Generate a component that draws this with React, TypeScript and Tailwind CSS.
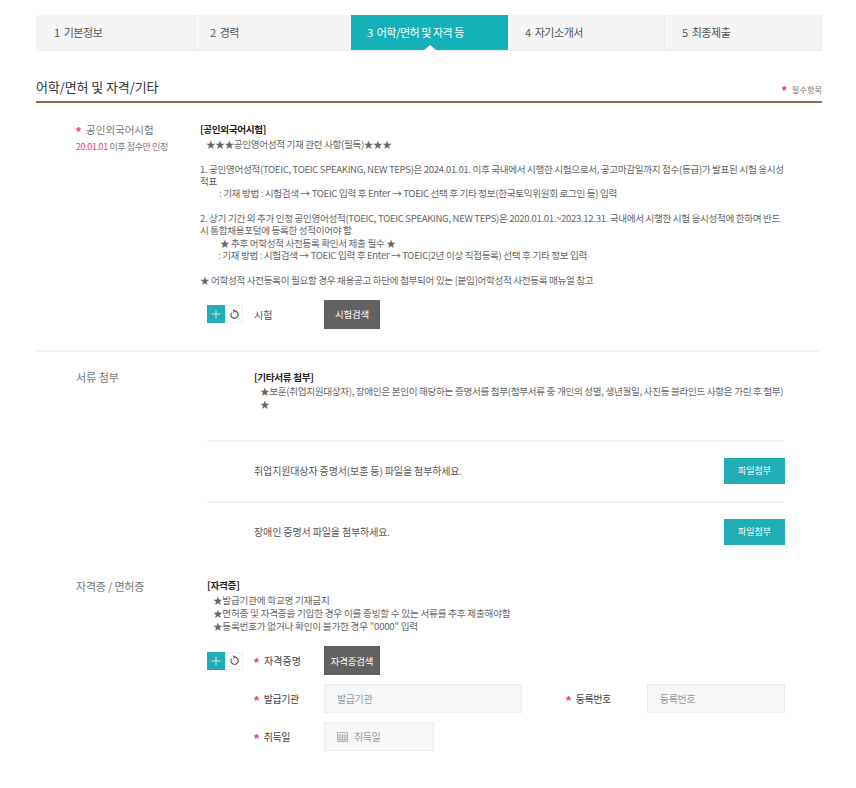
import { Plus } from "lucide-react";

const FONT = "[font-family:'Noto_Sans_CJK_KR','Noto_Sans',sans-serif]";

const steps = ["1  기본정보", "2  경력", "3  어학/면허 및 자격 등", "4  자기소개서", "5  최종제출"];

function Req() {
  return (
    <span className="relative top-[2px] mr-[5px] font-['Liberation_Sans'] text-[13px] font-bold leading-[0] text-[#e8466a]">
      *
    </span>
  );
}

function AddReset() {
  return (
    <div className="flex h-[18px] w-[36px] shrink-0">
      <button className="flex h-[18px] w-[18px] items-center justify-center bg-[#20adb5]">
        <Plus className="h-[14px] w-[14px] text-white" strokeWidth={1.2} />
      </button>
      <button className="flex h-[18px] w-[18px] items-center justify-center border border-[#eeeeee] bg-white">
        <svg viewBox="0 0 12 12" className="h-[11px] w-[11px]" fill="none" stroke="#444444" strokeWidth="1.1">
          <path d="M6 2.2A4 4 0 1 1 2.7 4" />
          <path d="M4.4 0.8L6.2 2.2L4.6 3.8" />
        </svg>
      </button>
    </div>
  );
}

function DarkButton({ label }: { label: string }) {
  return (
    <button className="flex h-[29px] w-[56px] items-center justify-center bg-[#626262] text-[9.4px] tracking-[-0.1px] text-white">
      {label}
    </button>
  );
}

function FileRow({ text }: { text: string }) {
  return (
    <div className="flex h-[61px] items-start justify-between border-t-2 border-[#f2f2f2] pl-[47px] pt-[16px]">
      <span className="text-[10px] leading-[26px] tracking-[-0.13px] text-[#555555]">{text}</span>
      <button className="-mr-px flex h-[26px] w-[61px] items-center justify-center bg-[#20adb5] text-[9px] text-white">
        파일첨부
      </button>
    </div>
  );
}

function Field({ label, placeholder, className }: { label: string; placeholder: string; className: string }) {
  return (
    <div className="flex items-center">
      <span className={`text-[10px] tracking-[-0.4px] text-[#444444] ${className}`}>
        <Req />
        {label}
      </span>
      {placeholder && (
        <div className="flex h-[29px] flex-1 items-center border border-[#ebedee] bg-[#f5f7f8] pl-[12px] text-[10px] tracking-[-0.4px] text-[#999999]">
          {placeholder}
        </div>
      )}
    </div>
  );
}

export default function App() {
  return (
    <div className={`${FONT} min-h-[788px] w-[856px] bg-white pl-[36px] pr-[34px] pt-[15px] text-[#666666]`}>
      <div className="grid h-[36px] grid-cols-[159px_156px_157px_157px_157px] border-b border-[#eeeeee] bg-[#f5f5f5]">
        {steps.map((step, i) => (
          <div
            key={step}
            className={
              i === 2
                ? "relative flex items-center whitespace-pre bg-[#14b1b8] pl-[16px] text-[11px] tracking-[-0.45px] text-white"
                : i === 0
                  ? "flex items-center whitespace-pre border-r border-[#ebebeb] pl-[18px] text-[11px] tracking-[-0.45px] text-[#555555]"
                  : i === 1
                    ? "flex items-center whitespace-pre pl-[15px] text-[11px] tracking-[-0.45px] text-[#555555]"
                    : "flex items-center whitespace-pre border-r border-[#ebebeb] pl-[17px] text-[11px] tracking-[-0.45px] text-[#555555]"
            }
          >
            {step}
            {i === 2 && (
              <span className="absolute bottom-[-1px] left-1/2 h-0 w-0 -translate-x-1/2 border-x-[7px] border-b-[6px] border-x-transparent border-b-white" />
            )}
          </div>
        ))}
      </div>

      <div className="mt-[25px] flex items-end justify-between border-b-2 border-[#8a6a52] pb-[4px]">
        <h2 className="text-[13px] leading-[21px] tracking-[-0.1px] text-[#333333]">어학/면허 및 자격/기타</h2>
        <span className="pb-[1px] text-[8.2px] leading-[14px] text-[#777777]">
          <Req />
          필수항목
        </span>
      </div>

      <section className="mr-[3px] flex border-b-2 border-[#f4f4f4] pb-[21px] pt-[20px]">
        <div className="w-[164px] shrink-0 pl-[40px]">
          <p className="text-[10.5px] leading-[14px] text-[#777777]">
            <Req />
            공인외국어시험
          </p>
          <p className="mt-[3px] text-[9px] leading-[14px] tracking-[-0.4px] text-[#777777]">
            <span className="text-[#e8466a]">20.01.01</span> 이후 점수만 인정
          </p>
        </div>
        <div>
          <div className="whitespace-nowrap text-[9.6px] leading-[12.3px] tracking-[-0.34px] text-[#666666]">
            <p className="mb-[3px] font-bold text-[#222222]">[공인외국어시험]</p>
            <p className="pl-[6px]">★★★공인영어성적 기재 관련 사항(필독)★★★</p>
            <p className="h-[12.3px]" />
            <p>1. 공인영어성적(TOEIC, TOEIC SPEAKING, NEW TEPS)은 2024.01.01. 이후 국내에서 시행한 시험으로서, 공고마감일까지 점수(등급)가 발표된 시험 응시성</p>
            <p>적표</p>
            <p className="pl-[19px]">: 기재 방법 : 시험검색 → TOEIC 입력 후 Enter → TOEIC 선택 후 기타 정보(한국토익위원회 로그인 등) 입력</p>
            <p className="h-[12.3px]" />
            <p>2. 상기 기간 외 추가 인정 공인영어성적(TOEIC, TOEIC SPEAKING, NEW TEPS)은 2020.01.01.~2023.12.31. 국내에서 시행한 시험 응시성적에 한하며 반드</p>
            <p>시 통합채용포털에 등록한 성적이어야 함</p>
            <p className="pl-[20px]">★ 추후 어학성적 사전등록 확인서 제출 필수 ★</p>
            <p className="pl-[18px]">: 기재 방법 : 시험검색 → TOEIC 입력 후 Enter → TOEIC(2년 이상 직접등록) 선택 후 기타 정보 입력</p>
            <p className="h-[12.3px]" />
            <p>★ 어학성적 사전등록이 필요할 경우 채용공고 하단에 첨부되어 있는 [붙임]어학성적 사전등록 매뉴얼 참고</p>
          </div>
          <div className="ml-[7px] mt-[14px] flex items-center">
            <AddReset />
            <span className="ml-[11px] w-[70px] text-[10px] text-[#555555]">시험</span>
            <DarkButton label="시험검색" />
          </div>
        </div>
      </section>

      <section className="flex pt-[17px]">
        <div className="w-[171px] shrink-0 pl-[40px] text-[11px] leading-[16px] text-[#777777]">서류 첨부</div>
        <div className="w-[577px]">
          <div className="h-[71px] whitespace-nowrap pl-[47px] pt-[2px] text-[9.6px] leading-[13px] tracking-[-0.32px]">
            <p className="mb-[1px] font-bold text-[#222222]">[기타서류 첨부]</p>
            <p className="pl-[6px]">★보훈(취업지원대상자), 장애인은 본인이 해당하는 증명서를 첨부(첨부서류 중 개인의 성별, 생년월일, 사진등 블라인드 사항은 가린 후 첨부)</p>
            <p className="pl-[6px]">★</p>
          </div>
          <FileRow text="취업지원대상자 증명서(보훈 등) 파일을 첨부하세요." />
          <FileRow text="장애인 증명서 파일을 첨부하세요." />
        </div>
      </section>

      <section className="flex pt-[16px]">
        <div className="w-[171px] shrink-0 pl-[40px] text-[11px] leading-[16px] tracking-[-0.2px] text-[#777777]">자격증 / 면허증</div>
        <div>
          <div className="whitespace-nowrap pt-[1px] text-[9.6px] leading-[12.6px] tracking-[-0.22px]">
            <p className="mb-[3px] font-bold text-[#222222]">[자격증]</p>
            <p className="pl-[6px]">★발급기관에 학교명 기재금지</p>
            <p className="pl-[6px]">★면허증 및 자격증을 기입한 경우 이를 증빙할 수 있는 서류를 추후 제출해야함</p>
            <p className="pl-[6px]">★등록번호가 없거나 확인이 불가한 경우 "0000" 입력</p>
          </div>
          <div className="mt-[14px] flex items-center">
            <AddReset />
            <span className="ml-[11px] w-[70px] text-[10px] text-[#444444]">
              <Req />
              자격증명
            </span>
            <DarkButton label="자격증검색" />
          </div>
          <div className="ml-[47px] mt-[9px] flex w-[531px] gap-[44px]">
            <div className="w-[268px]">
              <Field label="발급기관" placeholder="발급기관" className="w-[70px]" />
            </div>
            <div className="flex-1">
              <Field label="등록번호" placeholder="등록번호" className="w-[81px]" />
            </div>
          </div>
          <div className="ml-[47px] mt-[9px] flex items-center">
            <Field label="취득일" placeholder="" className="w-[70px]" />
            <div className="flex h-[29px] w-[110px] items-center gap-[6px] border border-[#ebedee] bg-[#f5f7f8] pl-[12px] text-[10px] tracking-[-0.4px] text-[#999999]">
              <svg viewBox="0 0 11 10" className="h-[10px] w-[11px]" fill="none" stroke="#b4b4b4" strokeWidth="1">
                <path d="M0.5 0.5h10v9h-10z M0.5 3h10 M0.5 5.2h10 M0.5 7.4h10 M3 3v6.5 M5.5 3v6.5 M8 3v6.5" />
              </svg>
              취득일
            </div>
          </div>
        </div>
      </section>
    </div>
  );
}
